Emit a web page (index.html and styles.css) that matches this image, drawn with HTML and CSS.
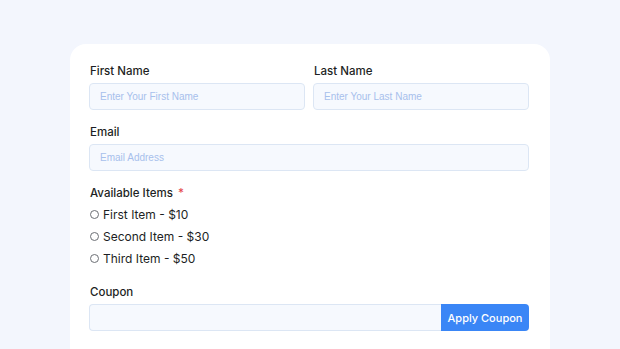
FILE: index.html
```html
<!DOCTYPE html>
<html>
<head>
<meta charset="utf-8">
<link rel="stylesheet" href="styles.css">
</head>
<body>
<div class="card">
  <div class="row">
    <div class="field">
      <label class="label">First Name</label>
      <div class="input">Enter Your First Name</div>
    </div>
    <div class="field">
      <label class="label">Last Name</label>
      <div class="input">Enter Your Last Name</div>
    </div>
  </div>
  <div class="field">
    <label class="label">Email</label>
    <div class="input">Email Address</div>
  </div>
  <div class="field items">
    <label class="label">Available Items <span class="req">*</span></label>
    <div class="radios">
      <div class="radio"><span class="circle"></span>First Item - $10</div>
      <div class="radio"><span class="circle"></span>Second Item - $30</div>
      <div class="radio"><span class="circle"></span>Third Item - $50</div>
    </div>
  </div>
  <div class="field coupon">
    <label class="label">Coupon</label>
    <div class="coupon-row">
      <div class="input grow"></div>
      <button class="btn">Apply Coupon</button>
    </div>
  </div>
</div>
</body>
</html>
```
FILE: styles.css
```css
html, body {
  margin: 0;
  padding: 0;
  background: #f3f6fd;
  height: 349px;
  overflow: hidden;
}
body {
  padding-top: 44px;
  box-sizing: border-box;
  font-family: Inter, "Noto Sans", sans-serif;
  color: #1d1f24;
}
.card {
  margin-left: 70px;
  width: 480px;
  box-sizing: border-box;
  background: #ffffff;
  border-radius: 16px 16px 0 0;
  padding: 20px 21px 0 19px;
  height: 305px;
  overflow: hidden;
}
.row {
  display: flex;
  gap: 8px;
}
.row .field {
  flex: 1;
}
.field {
  margin-bottom: 15px;
}
.label {
  display: block;
  font-size: 11.5px;
  font-weight: 500;
  line-height: 15px;
  margin-bottom: 4px;
  padding-left: 1px;
}
.req {
  color: #e5484d;
  margin-left: 2px;
}
.input {
  height: 27px;
  box-sizing: border-box;
  border: 1px solid #dce6f4;
  background: #f6f9fe;
  border-radius: 4px;
  padding-left: 10px;
  font-family: "Liberation Sans", Arial, sans-serif;
  font-size: 10px;
  line-height: 26px;
  color: #a7c0ec;
}
.items {
  margin-bottom: 0;
}
.items .label {
  margin-bottom: 2px;
}
.radios {
  display: flex;
  flex-direction: column;
}
.radio {
  display: flex;
  align-items: center;
  height: 22px;
  font-size: 12px;
  color: #1d1f24;
  padding-left: 1px;
}
.circle {
  width: 9px;
  height: 9px;
  border: 1px solid #6c6f75;
  border-radius: 50%;
  margin-right: 4px;
  box-sizing: border-box;
  background: #fff;
}
.coupon {
  margin-top: 16px;
}
.coupon-row {
  display: flex;
}
.grow {
  flex: 1;
  border-radius: 4px 0 0 4px;
  border-right: none;
}
.btn {
  width: 88px;
  height: 27px;
  border: none;
  border-radius: 0 4px 4px 0;
  background: #3a86f6;
  color: #ffffff;
  font-family: Inter, "Noto Sans", sans-serif;
  font-size: 11px;
  font-weight: 500;
  padding: 0;
}
```
